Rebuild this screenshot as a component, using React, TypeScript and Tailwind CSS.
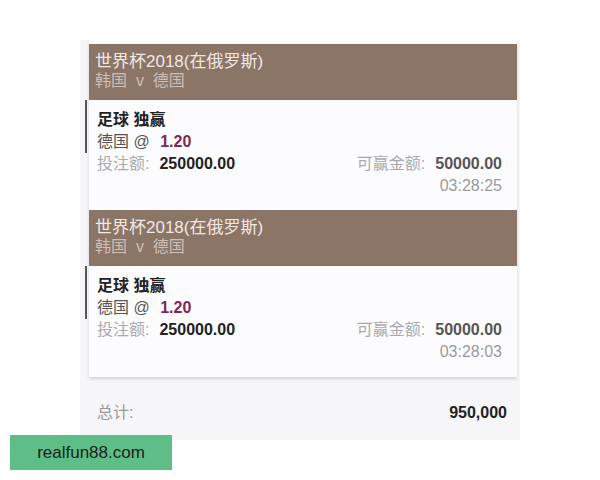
import React from 'react'

type Bet = { time: string }

const bets: Bet[] = [{ time: '03:28:25' }, { time: '03:28:03' }]

const font = { fontFamily: '"Liberation Sans", "Noto Sans CJK SC", sans-serif' }

function BetCard({ bet }: { bet: Bet }) {
  return (
    <div>
      {/* Match header */}
      <div className="h-[56px] bg-[#8b7567] pl-[6px] pt-[8px] leading-[19px]">
        <div className="text-[17px] text-[#f1e8e4]">世界杯2018(在俄罗斯)</div>
        <div className="text-[16px] text-[#cdbfb7]">韩国&nbsp;&nbsp;v&nbsp;&nbsp;德国</div>
      </div>

      {/* Selection */}
      <div className="-ml-[4px] border-l-2 border-[#575757] pl-[10px] pt-[9px] text-[16px] leading-[22px]">
        <div className="font-bold text-[#222]">足球 独赢</div>
        <div className="text-[#555]">
          德国 @ <span className="ml-[6px] font-bold text-[#7a2a58]">1.20</span>
        </div>
      </div>

      <div className="flex justify-between pl-[8px] pr-[15px] text-[16px] leading-[22px]">
        <div>
          <span className="text-[#aaa]">投注额:</span>
          <span className="ml-[10px] font-bold text-[#222]">250000.00</span>
        </div>
        <div>
          <span className="text-[#aaa]">可赢金额:</span>
          <span className="ml-[10px] font-bold text-[#555]">50000.00</span>
        </div>
      </div>
      <div className="pr-[15px] text-right text-[16px] leading-[21px] text-[#9a9a9a]">{bet.time}</div>
    </div>
  )
}

export default function App() {
  return (
    <div className="relative h-[480px] w-[600px] overflow-hidden bg-white" style={font}>
      <div className="ml-[80px] mt-[40px] h-[400px] w-[440px] bg-[#f6f6f9]">
        {/* Bet list */}
        <div className="ml-[9px] mr-[3px] flex flex-col gap-[14px] bg-[#fcfcfe] pt-[4px] pb-[15px] shadow-[0_2px_3px_rgba(0,0,0,0.14)]">
          {bets.map((bet, i) => (
            <BetCard key={i} bet={bet} />
          ))}
        </div>

        {/* Total */}
        <div className="mt-[25px] flex justify-between pl-[17px] pr-[13px] text-[16px] leading-[22px]">
          <span className="text-[#999]">总计:</span>
          <span className="font-bold text-[#222]">950,000</span>
        </div>
      </div>

      {/* Watermark */}
      <div className="absolute left-[10px] top-[435px] flex h-[35px] w-[162px] items-center justify-center bg-[#5dbf87] text-[17px] text-[#1c1c1c]">
        realfun88.com
      </div>
    </div>
  )
}
